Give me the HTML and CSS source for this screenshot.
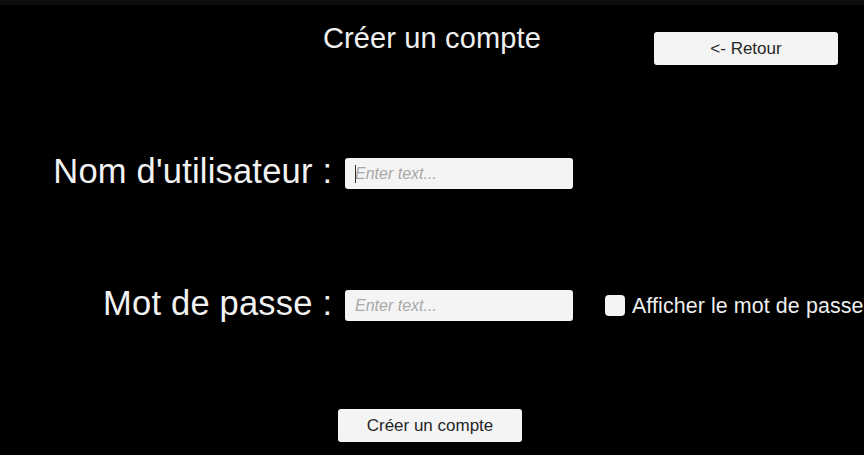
FILE: index.html
```html
<!DOCTYPE html>
<html lang="fr">
<head>
<meta charset="utf-8">
<title>Créer un compte</title>
<link rel="stylesheet" href="styles.css">
</head>
<body>
<div class="topbar"></div>
<header class="header">
  <div class="spacer"></div>
  <h1 class="title">Créer un compte</h1>
  <div class="header-right">
    <button class="btn">&lt;- Retour</button>
  </div>
</header>
<main class="form">
  <label class="label" for="user">Nom d'utilisateur :</label>
  <div class="field">
    <input class="input" id="user" type="text" placeholder="Enter text...">
    <span class="caret"></span>
  </div>
  <div></div>
  <label class="label" for="pass">Mot de passe :</label>
  <div class="field">
    <input class="input" id="pass" type="password" placeholder="Enter text...">
  </div>
  <div class="show">
    <span class="checkbox"></span>
    <span class="show-text">Afficher le mot de passe</span>
  </div>
</main>
<div class="actions">
  <button class="btn">Créer un compte</button>
</div>
</body>
</html>
```

FILE: styles.css
```css
html, body {
  margin: 0;
  padding: 0;
  background: #000;
  width: 864px;
  height: 455px;
  overflow: hidden;
  font-family: "Liberation Sans", Arial, sans-serif;
  color: #fff;
}

.topbar {
  height: 5px;
  background: #0e0e0e;
}

.header {
  display: grid;
  grid-template-columns: 1fr auto 1fr;
  margin-top: 16px;
}

.title {
  margin: 0;
  font-size: 29px;
  line-height: 34px;
  font-weight: normal;
  letter-spacing: 0.15px;
  color: #f0f0f0;
}

.header-right {
  display: flex;
  justify-content: flex-end;
  align-items: flex-start;
  padding-right: 26px;
}

.header-right .btn {
  margin-top: 11px;
}

.btn {
  width: 184px;
  height: 33px;
  border: none;
  border-radius: 3px;
  background: #f4f4f4;
  color: #262626;
  font-family: "Liberation Sans", Arial, sans-serif;
  font-size: 17px;
  padding: 0;
  padding-top: 1px;
  display: flex;
  align-items: center;
  justify-content: center;
}

.form {
  display: grid;
  grid-template-columns: 332px 228px auto;
  column-gap: 13px;
  row-gap: 101px;
  align-items: center;
  margin-top: 93px;
}

.label {
  justify-self: end;
  font-size: 34.5px;
  line-height: 27px;
  margin-bottom: 4px;
  letter-spacing: 0.2px;
  margin-right: -0.2px;
  color: #f2f2f2;
  white-space: nowrap;
}

.field {
  position: relative;
  height: 31px;
}

.input {
  box-sizing: border-box;
  width: 228px;
  height: 31px;
  border: none;
  border-radius: 3px;
  background: #f4f4f4;
  padding: 0 0 0 10px;
  margin: 0;
  font-family: "Liberation Sans", Arial, sans-serif;
  font-size: 16px;
  color: #222;
  outline: none;
  display: block;
}

.input::placeholder {
  font-style: italic;
  color: #a8a8a8;
}

.caret {
  position: absolute;
  left: 10px;
  top: 7px;
  width: 1px;
  height: 18px;
  background: #333;
}

.show {
  display: flex;
  align-items: center;
  padding-left: 19px;
  white-space: nowrap;
}

.checkbox {
  width: 20px;
  height: 21px;
  border-radius: 4px;
  background: #f4f4f4;
  margin-right: 7px;
  flex: none;
}

.show-text {
  font-size: 21.4px;
  line-height: 24px;
  letter-spacing: 0.1px;
  color: #eeeeee;
}

.actions {
  display: flex;
  justify-content: center;
  margin-top: 88px;
  padding-right: 4px;
}
```
